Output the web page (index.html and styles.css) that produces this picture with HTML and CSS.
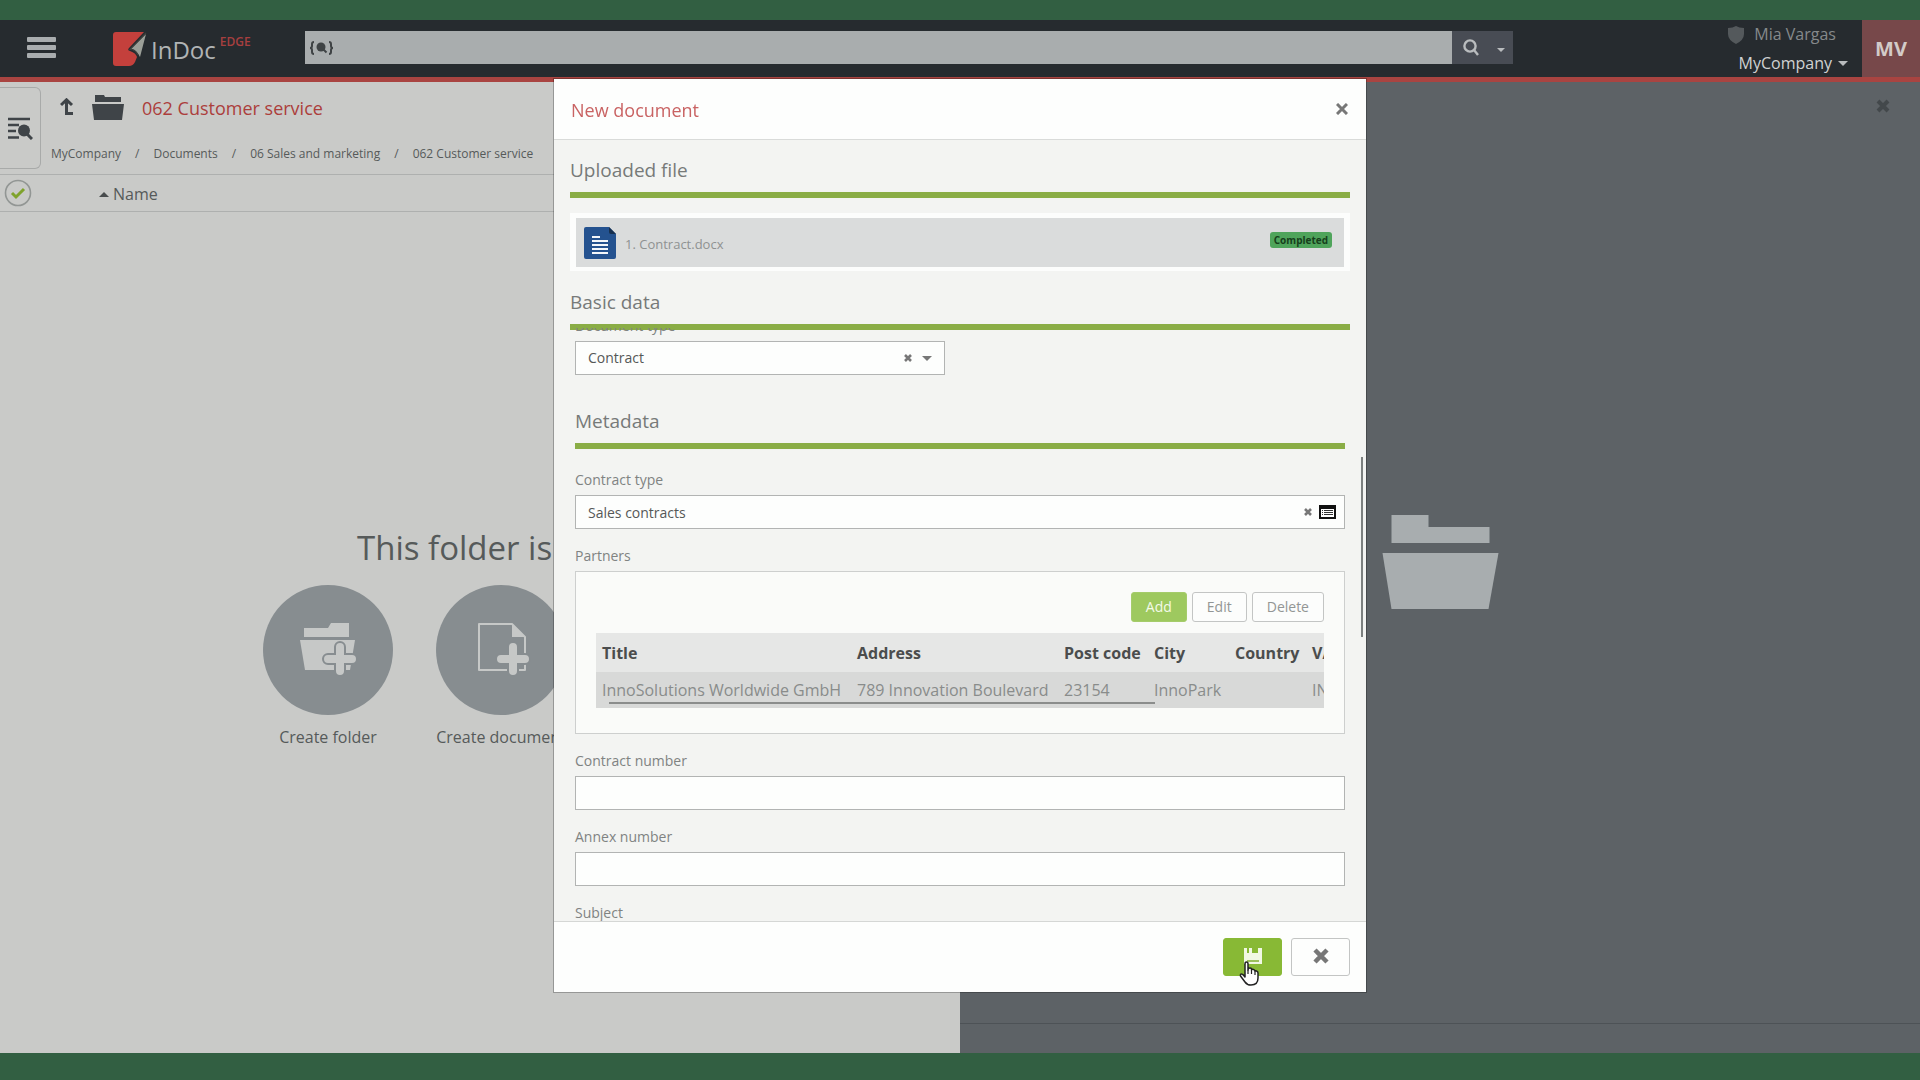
FILE: index.html
```html
<!DOCTYPE html>
<html lang="en">
<head>
<meta charset="utf-8">
<title>InDoc EDGE – New document</title>
<link rel="stylesheet" href="styles.css">
</head>
<body>
<div class="app">
  <header class="topbar">
    <button class="menu" type="button" aria-label="Menu"><span></span><span></span><span></span></button>
    <a class="brand" href="#">
      <svg width="34" height="34" viewBox="0 0 34 34" aria-hidden="true">
        <path fill="#c4403c" d="M3 0H31L16 16Q14 18 17 19Q23 21 24 25L22 30Q20 34 16 34H3Q0 34 0 31V3Q0 0 3 0Z"/>
        <path fill="#9b9f98" d="M33 2L17 17.500Q23 17 27 25Z"/>
        <path fill="none" stroke="#3c3f3c" stroke-width="1.200" d="M33 1L17 17.500Q22 17 25 23"/>
      </svg>
      <span class="brand-name">InDoc</span><span class="brand-sup">EDGE</span>
    </a>
    <form class="search">
      <label class="search-field">
        <svg width="25" height="16" viewBox="0 0 25 16" fill="none" stroke="#3f4345" stroke-width="2" aria-hidden="true">
          <path d="M5 2Q3 2 3 4V6Q3 8 1 8Q3 8 3 10V12Q3 14 5 14M20 2Q22 2 22 4V6Q22 8 24 8Q22 8 22 10V12Q22 14 20 14"/>
          <circle cx="12" cy="7" r="4.500" fill="#3f4345" stroke="none"/><path d="M14 9L17.500 12.500"/>
        </svg>
        <input type="text" aria-label="Search">
      </label>
      <button class="search-go" type="submit" aria-label="Search">
        <svg width="18" height="18" viewBox="0 0 18 18" fill="none" stroke="#b9bcbe" stroke-width="2.4"><circle cx="8" cy="7" r="5.6"/><path d="M12 11L16 16"/></svg>
      </button>
      <button class="search-more" type="button" aria-label="Search options"><i class="caret light"></i></button>
    </form>
    <div class="user">
      <div class="user-name">
        <svg width="16" height="18" viewBox="0 0 16 18" aria-hidden="true"><path fill="#54595c" d="M8 0Q11 2 16 2V8Q16 14 8 18Q0 14 0 8V2Q5 2 8 0Z"/></svg>
        <span>Mia Vargas</span>
      </div>
      <button class="company" type="button">MyCompany<i class="caret light"></i></button>
    </div>
    <div class="avatar">MV</div>
  </header>

  <main class="workspace">
    <section class="list">
      <div class="list-head">
        <button class="side-tab" type="button" aria-label="Search panel">
          <svg width="25" height="23" viewBox="0 0 25 23" fill="none" stroke="#3f4448" stroke-width="2.6" aria-hidden="true">
            <path d="M0 2H22M0 8H11M0 14H8M0 20.500H11"/><circle cx="16" cy="13.500" r="6" fill="#3f4448" stroke="none"/><path d="M19 17L24 22" stroke-width="3"/>
          </svg>
        </button>
        <div class="list-titles">
          <div class="list-title">
            <svg class="up" width="14" height="18" viewBox="0 0 14 18" fill="none" stroke="#3f4448" stroke-width="3" aria-hidden="true"><path d="M1 7L6.500 1.800L12 7M6.500 2V15.500H13"/></svg>
            <svg width="32" height="25" viewBox="0 0 32 25" fill="#3f4448" aria-hidden="true"><path d="M3 0H12L13 2H29V7H3Z"/><path d="M0 9H32L30 25H2Z"/></svg>
            <h1>062 Customer service</h1>
          </div>
          <nav class="crumbs" aria-label="Breadcrumb">
            <a href="#">MyCompany</a><span>/</span><a href="#">Documents</a><span>/</span><a href="#">06 Sales and marketing</a><span>/</span><a href="#">062 Customer service</a>
          </nav>
        </div>
      </div>
      <div class="columns">
        <svg width="28" height="28" viewBox="0 0 28 28" fill="none" aria-hidden="true"><circle cx="14" cy="14" r="12.500" stroke="#929694" stroke-width="1.600"/><path d="M8 14L12 18L20 10" stroke="#7fa32c" stroke-width="3"/></svg>
        <button class="sort" type="button"><i class="caret up-caret"></i>Name</button>
      </div>
      <div class="empty">
        <h2>This folder is empty</h2>
        <div class="actions">
          <button class="action" type="button">
            <span class="disc">
              <svg width="60" height="56" viewBox="0 0 60 56" aria-hidden="true">
                <path fill="#c6c8c7" d="M6 6H30L33 1H51V15H6Z"/><path fill="#c6c8c7" d="M2 18H57L52 48H7Z"/>
                <path fill="none" stroke="#878d90" stroke-width="12" stroke-linecap="round" d="M42 25V49M30 37H54"/>
                <path fill="none" stroke="#c6c8c7" stroke-width="8" stroke-linecap="round" d="M42 25V49M30 37H54"/>
              </svg>
            </span>
            <span>Create folder</span>
          </button>
          <button class="action" type="button">
            <span class="disc">
              <svg width="60" height="56" viewBox="0 0 60 56" aria-hidden="true">
                <path fill="none" stroke="#c6c8c7" stroke-width="2" stroke-linejoin="round" d="M8 2H41L54 15V48H8Z"/><path fill="#c6c8c7" d="M41 2L54 15H41Z"/>
                <path fill="none" stroke="#878d90" stroke-width="12" stroke-linecap="round" d="M42 25V49M30 37H54"/>
                <path fill="none" stroke="#c6c8c7" stroke-width="8" stroke-linecap="round" d="M42 25V49M30 37H54"/>
              </svg>
            </span>
            <span>Create document</span>
          </button>
        </div>
      </div>
    </section>

    <section class="preview">
      <button class="preview-close" type="button" aria-label="Close preview"><svg width="14" height="14" viewBox="0 0 14 14"><path stroke="#43484b" stroke-width="4" d="M2 2L12 12M12 2L2 12"/></svg></button>
      <div class="preview-body">
        <svg width="117" height="94" viewBox="0 0 116 94" fill="#a8adaf" aria-hidden="true"><path d="M9 0H46V12H107V28H9Z"/><path d="M0 38H116L106 94H9Z"/></svg>
      </div>
      <div class="preview-foot"></div>
    </section>
  </main>
</div>

<div class="modal" role="dialog" aria-labelledby="dialog-title">
  <header class="modal-head">
    <h2 id="dialog-title">New document</h2>
    <button class="plain" type="button" aria-label="Close"><svg width="12" height="12" viewBox="0 0 12 12"><path stroke="#777" stroke-width="3" d="M1 1L11 11M11 1L1 11"/></svg></button>
  </header>
  <div class="modal-body">
    <h3>Uploaded file</h3>
    <div class="file">
      <div class="file-row">
        <svg width="32" height="32" viewBox="0 0 32 32" aria-hidden="true">
          <path fill="#24528f" d="M2 0H25L32 7V30Q32 32 30 32H2Q0 32 0 30V2Q0 0 2 0Z"/><path fill="#17304f" d="M25 0L32 7H27Q25 7 25 5Z"/>
          <path stroke="#f2f6fa" stroke-width="2" d="M8 10H16M8 14H24M8 18H24M8 22H24M8 26H24"/>
        </svg>
        <span class="file-name">1. Contract.docx</span>
        <span class="badge">Completed</span>
      </div>
    </div>
    <h3>Basic data</h3>
    <div class="scroll">
      <div class="form">
        <div class="field half">
          <label for="doctype">Document type *</label>
          <div class="control">
            <select id="doctype"><option>Contract</option></select>
            <span class="tools pick">
              <button class="plain" type="button" aria-label="Clear document type"><svg width="8" height="8" viewBox="0 0 8 8"><path stroke="#777" stroke-width="2.600" d="M1 1L7 7M7 1L1 7"/></svg></button>
              <i class="caret"></i>
            </span>
          </div>
        </div>
        <h3>Metadata</h3>
        <div class="field">
          <label for="contract-type">Contract type</label>
          <div class="control">
            <input id="contract-type" type="text" value="Sales contracts">
            <span class="tools">
              <button class="plain" type="button" aria-label="Clear contract type"><svg width="8" height="8" viewBox="0 0 8 8"><path stroke="#777" stroke-width="2.600" d="M1 1L7 7M7 1L1 7"/></svg></button>
              <button class="plain" type="button" aria-label="Choose contract type"><svg width="17" height="14" viewBox="0 0 17 14"><rect x="1" y="1" width="15" height="12" fill="#fff" stroke="#111" stroke-width="2"/><path fill="#111" d="M0 0H17V4H0Z"/><path stroke="#333" d="M3 5.500H4M5 5.500H14M3 7.500H4M5 7.500H14M3 9.500H4M5 9.500H14"/></svg></button>
            </span>
          </div>
        </div>
        <div class="field">
          <span class="label" id="partners-label">Partners</span>
          <div class="partners" role="group" aria-labelledby="partners-label">
            <div class="row-buttons">
              <button class="btn add" type="button">Add</button>
              <button class="btn" type="button">Edit</button>
              <button class="btn" type="button">Delete</button>
            </div>
            <div class="table-wrap">
              <table>
                <colgroup><col class="c-title"><col class="c-address"><col class="c-post"><col class="c-city"><col class="c-country"><col class="c-vat"></colgroup>
                <thead><tr><th>Title</th><th>Address</th><th>Post code</th><th>City</th><th>Country</th><th>VAT</th></tr></thead>
                <tbody><tr><td>InnoSolutions Worldwide GmbH</td><td>789 Innovation Boulevard</td><td>23154</td><td>InnoPark</td><td></td><td>IN</td></tr></tbody>
              </table>
              <div class="hbar"></div>
            </div>
          </div>
        </div>
        <div class="field">
          <label for="contract-number">Contract number</label>
          <input id="contract-number" type="text">
        </div>
        <div class="field">
          <label for="annex-number">Annex number</label>
          <input id="annex-number" type="text">
        </div>
        <div class="field"><span class="label">Subject</span></div>
      </div>
    </div>
    <div class="vbar"></div>
  </div>
  <footer class="modal-foot">
    <button class="btn-lg save" type="button" aria-label="Save"><svg width="18" height="18" viewBox="0 0 18 18"><path fill="#f1f8e4" d="M0 1H3V6H14V1H18V17H0Z"/><path fill="#f1f8e4" d="M5 1H8V7H5Z"/><path stroke="#7fae2f" stroke-width="1.500" d="M3 14H15"/></svg>
      <svg class="pointer" width="20" height="26" viewBox="0 0 20 26" aria-hidden="true"><path fill="#fff" stroke="#222" stroke-width="1.500" stroke-linejoin="round" d="M6 13V3Q6 1 7.500 1T9 3V9Q9 7 11 7T12.500 9Q13 8 14.500 8.500T16 10Q16 9.500 17.500 10T19 12V17Q19 24 12 24Q8 24 6 21L1.500 15Q1 13 2.500 13T6 16Z"/><path stroke="#222" stroke-width="1.200" d="M9 9V13M12.500 9V13M16 10V14"/></svg>
    </button>
    <button class="btn-lg" type="button" aria-label="Cancel"><svg width="16" height="16" viewBox="0 0 16 16"><path stroke="#777" stroke-width="4.500" d="M2 2L14 14M14 2L2 14"/></svg></button>
  </footer>
</div>
</body>
</html>
```
FILE: styles.css
```css
* { box-sizing: border-box; }

body {
  margin: 0;
  background: #325f42;
  color: #565a5a;
  font: 16px/22px "Open Sans", "Noto Sans", sans-serif;
}

h1, h2, h3 { margin: 0; font-weight: 400; }
button, input, select { font: inherit; color: inherit; }
button { padding: 0; border: 0; background: none; }
svg { display: block; flex: none; }
a { color: inherit; text-decoration: none; }

.app {
  display: flex;
  flex-direction: column;
  min-height: 100vh;
  padding: 20px 0 27px;
}

.caret {
  display: inline-block;
  border: 5px solid transparent;
  border-top-color: #777;
  border-bottom: 0;
}
.caret.light { border-top-color: #b9bcbe; }
.caret.up-caret { border: 5px solid transparent; border-bottom-color: #484c4d; border-top: 0; }

/* Top bar */
.topbar {
  display: flex;
  align-items: stretch;
  height: 62px;
  background: #262b2f;
  border-bottom: 5px solid #a94441;
}
.menu {
  display: flex;
  flex-direction: column;
  justify-content: center;
  gap: 3px;
  width: 113px;
  padding: 0 0 2px 27px;
}
.menu span { width: 29px; height: 5px; border-radius: 1px; background: #a9adaf; }
.brand { display: flex; align-items: center; gap: 4px; width: 192px; }
.brand-name { color: #b1b4b5; font-size: 24px; padding-top: 2px; }
.brand-sup { color: #a63f3f; font-size: 12px; font-weight: 600; align-self: flex-start; padding-top: 11px; }
.search { display: flex; flex: 1; margin: 11px 0 13px; }
.search-field {
  display: flex;
  flex: 1;
  align-items: center;
  padding-left: 4px;
  background: #a9adae;
}
.search-field input { flex: 1; min-width: 0; border: 0; background: none; outline: 0; }
.search-go, .search-more { display: flex; align-items: center; justify-content: center; background: #484c54; }
.search-go { width: 37px; }
.search-more { width: 24px; padding-top: 4px; }
.search-more .caret { border-width: 4px 4px 0; }
.user {
  display: flex;
  flex-direction: column;
  align-items: flex-end;
  width: 349px;
  padding-right: 14px;
  line-height: 29px;
}
.user-name { display: flex; align-items: center; gap: 10px; padding-right: 12px; color: #85898b; }
.company { display: flex; align-items: center; gap: 6px; color: #d0d2d2; }
.avatar {
  display: flex;
  align-items: center;
  justify-content: center;
  width: 58px;
  background: #77484a;
  color: #d3cbc8;
  font-size: 20px;
  font-weight: 700;
}

/* Folder list */
.workspace { display: grid; grid-template-columns: 1fr 1fr; flex: 1; }
.list { display: flex; flex-direction: column; min-width: 0; background: #c9cac8; }
.list-head { display: flex; gap: 10px; height: 92px; }
.side-tab {
  display: flex;
  align-items: center;
  justify-content: center;
  width: 41px;
  height: 82px;
  margin-top: 5px;
  border: 1px solid #a8aaa9;
  border-left: 0;
  border-radius: 0 6px 6px 0;
}
.list-titles { white-space: nowrap; }
.list-title { display: flex; align-items: center; gap: 18px; height: 50px; padding-left: 9px; }
.list-title h1 { color: #ac3e3c; font-size: 18px; padding-top: 2px; }
.crumbs { display: flex; gap: 14px; padding-top: 11px; font-size: 12px; }
.columns {
  display: flex;
  align-items: center;
  height: 38px;
  padding-left: 4px;
  border-top: 1px solid #aeb0af;
  border-bottom: 1px solid #aeb0af;
}
.sort { display: flex; align-items: center; gap: 4px; margin-left: 67px; padding-top: 2px; }
.empty { display: flex; flex: 1; flex-direction: column; padding: 311px 0 0 263px; }
.empty h2 { padding-left: 94px; font-size: 33px; line-height: 50px; white-space: nowrap; }
.actions { display: flex; gap: 43px; padding-top: 12px; }
.action { width: 130px; white-space: nowrap; }
.disc {
  display: flex;
  align-items: center;
  justify-content: center;
  width: 130px;
  height: 130px;
  margin-bottom: 11px;
  border-radius: 50%;
  background: #878d90;
}

/* Preview */
.preview { display: flex; flex-direction: column; background: #5d6266; }
.preview-close { align-self: flex-end; margin: 17px 30px 0 0; }
.preview-body { display: flex; flex: 1; align-items: center; justify-content: center; padding-bottom: 12px; }
.preview-foot { height: 30px; border-top: 1px solid #4d5256; }

/* Dialog */
.modal {
  position: fixed;
  top: 79px;
  bottom: 88px;
  left: 0;
  right: 0;
  display: flex;
  flex-direction: column;
  max-width: 812px;
  margin: 0 auto;
  background: #fdfefd;
  box-shadow: 0 0 0 1px rgba(0, 0, 0, .25);
}
.modal-head {
  display: flex;
  align-items: center;
  justify-content: space-between;
  height: 61px;
  padding: 0 18px 0 17px;
  border-bottom: 1px solid #d9dbd9;
}
.modal-head h2 { padding-top: 2px; color: #c96363; font-size: 18px; }
.plain { display: flex; }
.modal-body {
  position: relative;
  display: flex;
  flex: 1;
  flex-direction: column;
  min-height: 0;
  padding: 16px 16px 0;
  background: #f3f4f2;
}
h3 {
  flex: none;
  padding-bottom: 8px;
  border-bottom: 6px solid #8aad46;
  color: #777a79;
  font-size: 19px;
  line-height: 28px;
}
.file { margin: 15px 0 17px; padding: 5px 6px 4px; background: #fcfdfc; }
.file-row {
  display: flex;
  align-items: center;
  gap: 9px;
  height: 49px;
  padding: 0 12px 0 8px;
  background: #dadcdc;
}
.file-name { flex: 1; padding-top: 2px; color: #8f9292; font-size: 13px; }
.badge {
  align-self: flex-start;
  margin-top: 14px;
  padding: 0 4px;
  border-radius: 3px;
  background: #4fa45b;
  color: #163f1c;
  font-size: 10px;
  font-weight: 700;
  line-height: 16px;
}
.scroll { flex: 1; min-height: 0; margin-top: -2px; overflow: hidden; }
.form { margin-top: -12px; padding: 0 5px; font-size: 14px; }
.form h3 { margin: 32px 0 21px; }
.field { margin-bottom: 17px; }
.field.half { width: 370px; }
.field label, .label { display: block; margin-bottom: 5px; color: #808382; line-height: 20px; }
.field input, .field select {
  display: block;
  width: 100%;
  height: 34px;
  padding: 0 12px;
  border: 1px solid #b2b4b3;
  border-radius: 0;
  background: #fdfefd;
  color: #555857;
  appearance: none;
}
.control { position: relative; }
.tools {
  position: absolute;
  top: 0;
  bottom: 0;
  right: 9px;
  display: flex;
  align-items: center;
  gap: 7px;
}
.tools.pick { right: 13px; gap: 10px; }
.partners { height: 163px; padding: 20px; border: 1px solid #cdcfce; background: #fafbf9; }
.row-buttons { display: flex; justify-content: flex-end; gap: 5px; }
.btn {
  height: 30px;
  padding: 0 14px;
  border: 1px solid #c3c5c4;
  border-radius: 3px;
  background: #fcfdfc;
  color: #939695;
}
.btn.add { border-color: #a5cc6b; background: #9ec95f; color: #f4fae9; }
.table-wrap { position: relative; margin-top: 11px; overflow: hidden; }
table { width: 797px; border-collapse: collapse; table-layout: fixed; font-size: 16px; text-align: left; }
th, td { padding: 0 0 0 6px; white-space: nowrap; }
th { height: 39px; background: #e6e7e6; color: #4b4d4d; }
td { height: 36px; background: #d8d9d8; color: #898c8b; }
.c-title { width: 255px; }
.c-address { width: 207px; }
.c-post { width: 90px; }
.c-city { width: 81px; }
.c-country { width: 77px; }
.c-vat { width: 87px; }
.hbar { position: absolute; left: 13px; right: 169px; bottom: 4px; height: 2px; background: #8b8d8c; }
.vbar { position: absolute; top: 317px; right: 3px; width: 2px; height: 180px; background: #7c807f; }
.modal-foot {
  display: flex;
  justify-content: flex-end;
  gap: 9px;
  height: 71px;
  padding: 16px 16px 0;
  border-top: 1px solid #d5d7d5;
}
.btn-lg {
  position: relative;
  display: flex;
  align-items: center;
  justify-content: center;
  width: 59px;
  height: 38px;
  padding-bottom: 3px;
  border: 1px solid #c3c5c4;
  border-radius: 3px;
}
.btn-lg.save { border-color: #88b935; background: #88b935; }
.pointer { position: absolute; left: 15px; top: 22px; }
```
